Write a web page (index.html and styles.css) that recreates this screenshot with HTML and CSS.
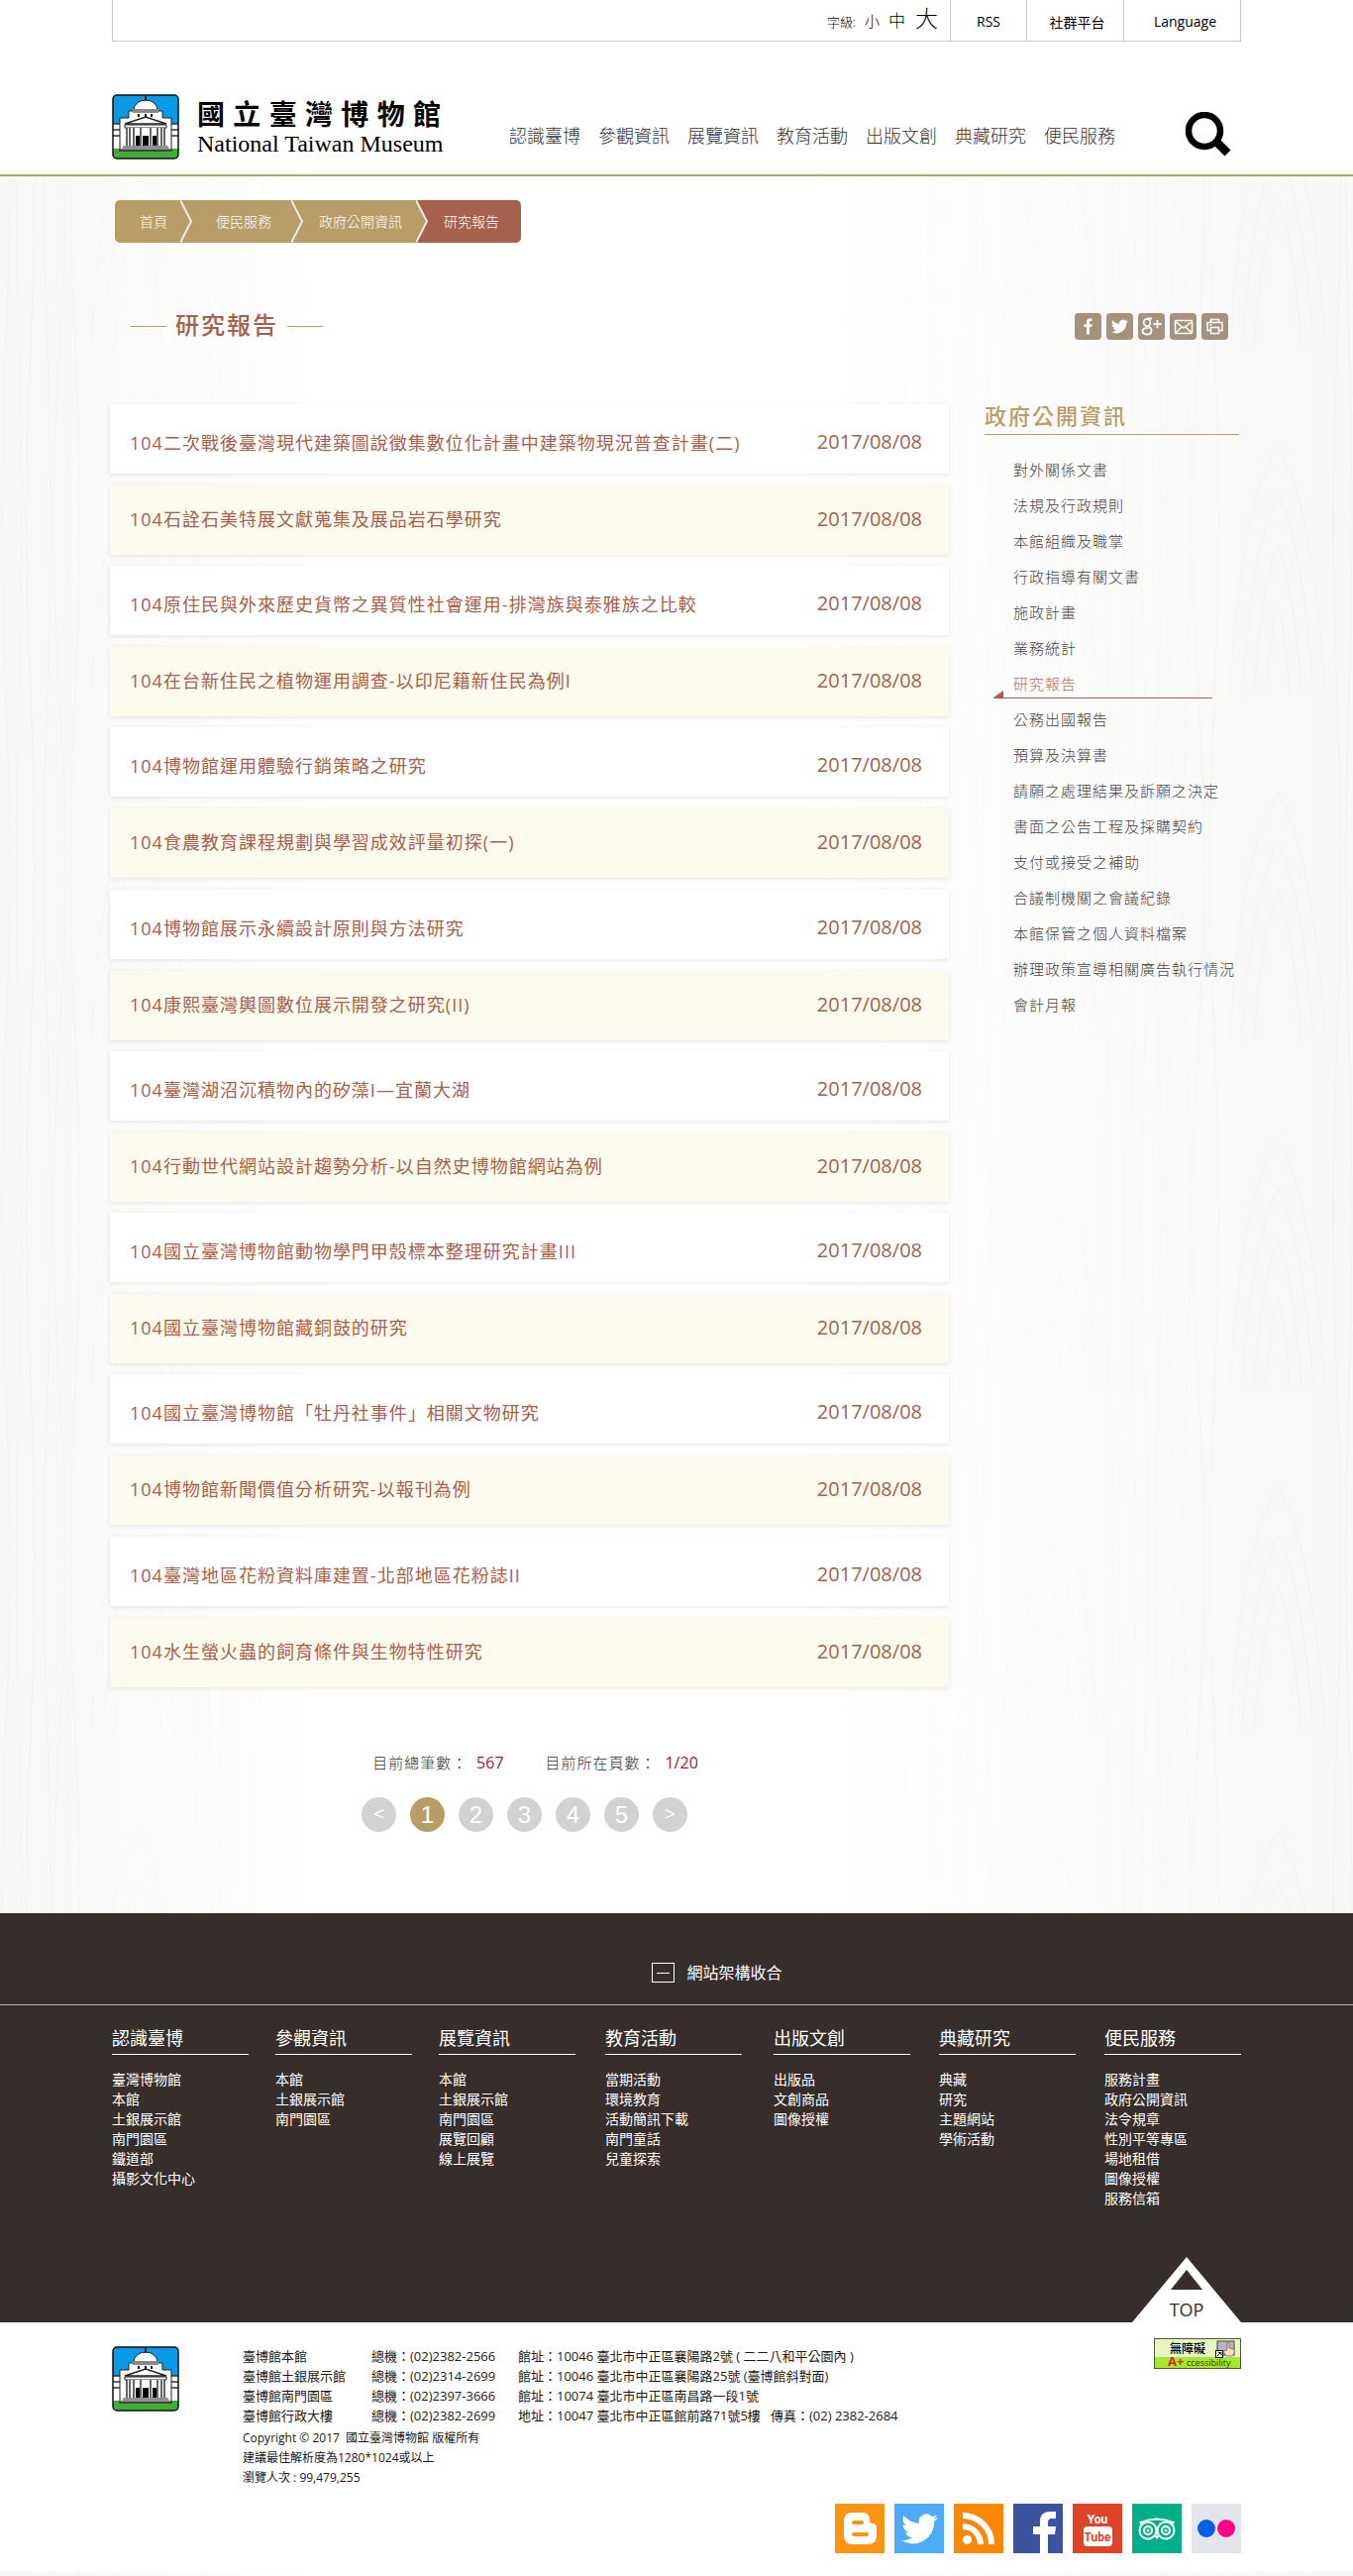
FILE: index.html
```html
<!DOCTYPE html>
<html lang="zh-Hant">
<head>
<meta charset="utf-8">
<meta name="viewport" content="width=device-width, initial-scale=1">
<title>研究報告 - 國立臺灣博物館</title>
<link rel="stylesheet" href="styles.css">
</head>
<body id="top">
<svg class="sprite" aria-hidden="true">
  <symbol id="museum" viewBox="0 0 68 66">
    <rect x="1" y="1" width="66" height="64" rx="4" fill="#0a9be6"/>
    <path d="M1 30h66v26H1z" fill="#fff"/>
    <path d="M1 55h66v6q0 4-4 4H5q-4 0-4-4z" fill="#3fae35"/>
    <path d="M1 30h7M1 36h7M1 42h7M60 30h7M60 36h7M60 42h7" stroke="#333" stroke-width="1.5"/>
    <path d="M8 56V24h9v-7h34v7h9v32z" fill="#fff" stroke="#222" stroke-width="1"/>
    <path d="M22 16a12 10 0 0 1 24 0z" fill="#fff" stroke="#222" stroke-width="1"/>
    <path d="M21 15h26v4H21z" fill="#888"/>
    <path d="M34 2v5" stroke="#111" stroke-width="1.5"/>
    <path d="M27 20v3M34 20v3M40 20v3" stroke="#111" stroke-width="2"/>
    <path d="M13 30l21-7 21 7z" fill="#fff" stroke="#222" stroke-width="1.5"/>
    <path d="M13 31h42v3H13z" fill="#fff" stroke="#222" stroke-width="1"/>
    <path d="M15 34h38v18H15z" fill="#fff"/>
    <path d="M15 34v18M18 34v18M22 34v18M29 34v18M39 34v18M46 34v18M50 34v18M53 34v18" stroke="#333" stroke-width="1.5"/>
    <path d="M24 42h4v10h-4zM31 42h6v10h-6zM41 42h4v10h-4z" fill="#000"/>
    <path d="M12 52h44l4 6H8z" fill="#8f8f8f"/>
    <path d="M7 57h54" stroke="#444" stroke-width="2"/>
    <rect x="1" y="1" width="66" height="64" rx="4" fill="none" stroke="#111" stroke-width="1.5"/>
  </symbol>
  <symbol id="bird" viewBox="0 0 24 24">
    <path d="M23.9 4.6a10 10 0 0 1-2.8.8 4.900 4.900 0 0 0 2.100-2.700 9.900 9.900 0 0 1-3.100 1.200 4.900 4.900 0 0 0-8.400 4.500A13.900 13.900 0 0 1 1.700 3.200a4.900 4.900 0 0 0 1.500 6.500 4.900 4.900 0 0 1-2.200-.6 4.900 4.900 0 0 0 3.900 4.900 4.900 4.900 0 0 1-2.200.1 4.900 4.900 0 0 0 4.600 3.400A9.900 9.900 0 0 1 0 19.500a14 14 0 0 0 21.500-12.400 10 10 0 0 0 2.400-2.500z" fill="#fff"/>
  </symbol>
</svg>

<header class="header">
  <div class="container">
    <div class="topbar">
      <div class="font-size">
        <span>字級:</span>
        <button type="button" class="fs-small">小</button>
        <button type="button" class="fs-medium">中</button>
        <button type="button" class="fs-large">大</button>
      </div>
      <a class="top-rss" href="#">RSS</a>
      <a class="top-social" href="#">社群平台</a>
      <a class="top-lang" href="#">Language</a>
    </div>
    <div class="masthead">
      <a class="brand" href="#">
        <svg width="68" height="66" aria-hidden="true"><use href="#museum"/></svg>
        <span class="brand-text">
          <span class="brand-zh"><span>國</span><span>立</span><span>臺</span><span>灣</span><span>博</span><span>物</span><span>館</span></span>
          <span class="brand-en">National Taiwan Museum</span>
        </span>
      </a>
      <nav class="main-nav">
        <a href="#">認識臺博</a><a href="#">參觀資訊</a><a href="#">展覽資訊</a><a href="#">教育活動</a><a href="#">出版文創</a><a href="#">典藏研究</a><a href="#">便民服務</a>
      </nav>
      <button type="button" class="search" aria-label="搜尋">
        <svg width="48" height="46" viewBox="0 0 48 46"><circle cx="20" cy="19" r="16" fill="none" stroke="#000" stroke-width="6.500"/><path d="M32 30l11.500 11.500" stroke="#000" stroke-width="8.500"/></svg>
      </button>
    </div>
  </div>
</header>

<main class="main">
  <div class="container">
    <ol class="breadcrumb">
      <li><a href="#">首頁</a></li>
      <li class="sep"><svg width="12" height="43"><path d="M0 0l11 21.500L0 43" fill="#b89e66" stroke="#efebe2" stroke-width="2"/></svg></li>
      <li><a href="#">便民服務</a></li>
      <li class="sep"><svg width="12" height="43"><path d="M0 0l11 21.500L0 43" fill="#b89e66" stroke="#efebe2" stroke-width="2"/></svg></li>
      <li><a href="#">政府公開資訊</a></li>
      <li class="sep sep-current"><svg width="12" height="43"><path d="M0 0l11 21.500L0 43" fill="#b89e66" stroke="#efebe2" stroke-width="2"/></svg></li>
      <li class="current">研究報告</li>
    </ol>

    <div class="title-row">
      <h1><span>研究報告</span></h1>
      <div class="share">
        <a href="#" aria-label="Facebook"><svg viewBox="0 0 27 27"><path d="M17.500 5.500h-2.300q-3.200 0-3.200 3.300v2.400H9.500v2.800H12v7.500h3v-7.500h2.300l.4-2.800H15V9.300q0-1.200 1.200-1.200h1.300z" fill="#fff"/></svg></a>
        <a href="#" aria-label="Twitter"><svg viewBox="0 0 27 27"><use href="#bird" x="5" y="5" width="17" height="17"/></svg></a>
        <a href="#" aria-label="Google+"><svg viewBox="0 0 27 27" fill="none" stroke="#fff" stroke-width="1.800"><ellipse cx="9" cy="9.500" rx="3.300" ry="3.700"/><path d="M9 5.500h5M10 13q3.500 2 3.500 4.500 0 4-4.500 4t-4.500-3.500q0-3 6-3"/><path d="M19.500 7v8M15.500 11h8"/></svg></a>
        <a href="#" aria-label="Email"><svg viewBox="0 0 27 27" fill="none" stroke="#fff" stroke-width="1.500"><rect x="5.500" y="7.500" width="17" height="13" rx="1"/><path d="M6 9l8 6 8-6M6 20l6-6M22 20l-6-6"/></svg></a>
        <a href="#" aria-label="列印"><svg viewBox="0 0 27 27" fill="none" stroke="#fff" stroke-width="1.500"><path d="M9.500 9.500v-3h8v3M9 17.500H6v-8h15v8h-3M8.500 12h2"/><path d="M9.500 14.500h8v6h-8z"/></svg></a>
      </div>
    </div>

    <div class="content">
      <section>
        <ul class="reports">
          <li><a href="#">104二次戰後臺灣現代建築圖說徵集數位化計畫中建築物現況普查計畫(二)</a><time>2017/08/08</time></li>
          <li><a href="#">104石詮石美特展文獻蒐集及展品岩石學研究</a><time>2017/08/08</time></li>
          <li><a href="#">104原住民與外來歷史貨幣之異質性社會運用-排灣族與泰雅族之比較</a><time>2017/08/08</time></li>
          <li><a href="#">104在台新住民之植物運用調查-以印尼籍新住民為例I</a><time>2017/08/08</time></li>
          <li><a href="#">104博物館運用體驗行銷策略之研究</a><time>2017/08/08</time></li>
          <li><a href="#">104食農教育課程規劃與學習成效評量初探(一)</a><time>2017/08/08</time></li>
          <li><a href="#">104博物館展示永續設計原則與方法研究</a><time>2017/08/08</time></li>
          <li><a href="#">104康熙臺灣輿圖數位展示開發之研究(II)</a><time>2017/08/08</time></li>
          <li><a href="#">104臺灣湖沼沉積物內的矽藻I—宜蘭大湖</a><time>2017/08/08</time></li>
          <li><a href="#">104行動世代網站設計趨勢分析-以自然史博物館網站為例</a><time>2017/08/08</time></li>
          <li><a href="#">104國立臺灣博物館動物學門甲殼標本整理研究計畫III</a><time>2017/08/08</time></li>
          <li><a href="#">104國立臺灣博物館藏銅鼓的研究</a><time>2017/08/08</time></li>
          <li><a href="#">104國立臺灣博物館「牡丹社事件」相關文物研究</a><time>2017/08/08</time></li>
          <li><a href="#">104博物館新聞價值分析研究-以報刊為例</a><time>2017/08/08</time></li>
          <li><a href="#">104臺灣地區花粉資料庫建置-北部地區花粉誌II</a><time>2017/08/08</time></li>
          <li><a href="#">104水生螢火蟲的飼育條件與生物特性研究</a><time>2017/08/08</time></li>
        </ul>
        <div class="counts">
          <span>目前總筆數： <b>567</b></span>
          <span>目前所在頁數： <b>1/20</b></span>
        </div>
        <nav class="pager" aria-label="分頁">
          <a class="arrow" href="#">&lt;</a><a class="on" href="#">1</a><a href="#">2</a><a href="#">3</a><a href="#">4</a><a href="#">5</a><a class="arrow" href="#">&gt;</a>
        </nav>
      </section>

      <aside class="side">
        <h2>政府公開資訊</h2>
        <ul>
          <li><a href="#">對外關係文書</a></li>
          <li><a href="#">法規及行政規則</a></li>
          <li><a href="#">本館組織及職掌</a></li>
          <li><a href="#">行政指導有關文書</a></li>
          <li><a href="#">施政計畫</a></li>
          <li><a href="#">業務統計</a></li>
          <li class="active"><a href="#">研究報告</a></li>
          <li><a href="#">公務出國報告</a></li>
          <li><a href="#">預算及決算書</a></li>
          <li><a href="#">請願之處理結果及訴願之決定</a></li>
          <li><a href="#">書面之公告工程及採購契約</a></li>
          <li><a href="#">支付或接受之補助</a></li>
          <li><a href="#">合議制機關之會議紀錄</a></li>
          <li><a href="#">本館保管之個人資料檔案</a></li>
          <li><a href="#">辦理政策宣導相關廣告執行情況</a></li>
          <li><a href="#">會計月報</a></li>
        </ul>
      </aside>
    </div>
  </div>
</main>

<footer>
  <div class="sitemap">
    <div class="toggle-row">
      <button type="button" class="toggle"><span class="minus"></span>網站架構收合</button>
    </div>
    <div class="container sitemap-cols">
      <div><h3>認識臺博</h3><ul><li><a href="#">臺灣博物館</a></li><li><a href="#">本館</a></li><li><a href="#">土銀展示館</a></li><li><a href="#">南門園區</a></li><li><a href="#">鐵道部</a></li><li><a href="#">攝影文化中心</a></li></ul></div>
      <div><h3>參觀資訊</h3><ul><li><a href="#">本館</a></li><li><a href="#">土銀展示館</a></li><li><a href="#">南門園區</a></li></ul></div>
      <div><h3>展覽資訊</h3><ul><li><a href="#">本館</a></li><li><a href="#">土銀展示館</a></li><li><a href="#">南門園區</a></li><li><a href="#">展覽回顧</a></li><li><a href="#">線上展覽</a></li></ul></div>
      <div><h3>教育活動</h3><ul><li><a href="#">當期活動</a></li><li><a href="#">環境教育</a></li><li><a href="#">活動簡訊下載</a></li><li><a href="#">南門童話</a></li><li><a href="#">兒童探索</a></li></ul></div>
      <div><h3>出版文創</h3><ul><li><a href="#">出版品</a></li><li><a href="#">文創商品</a></li><li><a href="#">圖像授權</a></li></ul></div>
      <div><h3>典藏研究</h3><ul><li><a href="#">典藏</a></li><li><a href="#">研究</a></li><li><a href="#">主題網站</a></li><li><a href="#">學術活動</a></li></ul></div>
      <div><h3>便民服務</h3><ul><li><a href="#">服務計畫</a></li><li><a href="#">政府公開資訊</a></li><li><a href="#">法令規章</a></li><li><a href="#">性別平等專區</a></li><li><a href="#">場地租借</a></li><li><a href="#">圖像授權</a></li><li><a href="#">服務信箱</a></li></ul></div>
      <a class="to-top" href="#top">
        <svg width="110" height="66" aria-hidden="true"><path d="M55 0l55 66H0z" fill="#fff"/><path d="M55 13l16 20H39z" fill="#372d2b"/></svg>
        <span>TOP</span>
      </a>
    </div>
  </div>

  <div class="bottom">
    <div class="container">
      <div class="bottom-row">
        <svg class="bottom-logo" width="68" height="66" aria-hidden="true"><use href="#museum"/></svg>
        <div class="info">
          <table>
            <tr><td class="place">臺博館本館</td><td class="phone">總機：(02)2382-2566</td><td>館址：10046 臺北市中正區襄陽路2號 ( 二二八和平公園內 )</td></tr>
            <tr><td class="place">臺博館土銀展示館</td><td class="phone">總機：(02)2314-2699</td><td>館址：10046 臺北市中正區襄陽路25號 (臺博館斜對面)</td></tr>
            <tr><td class="place">臺博館南門園區</td><td class="phone">總機：(02)2397-3666</td><td>館址：10074 臺北市中正區南昌路一段1號</td></tr>
            <tr><td class="place">臺博館行政大樓</td><td class="phone">總機：(02)2382-2699</td><td>地址：10047 臺北市中正區館前路71號5樓 &nbsp; 傳真：(02) 2382-2684</td></tr>
          </table>
          <p>Copyright © 2017 &nbsp;國立臺灣博物館 版權所有</p>
          <p>建議最佳解析度為1280*1024或以上</p>
          <p>瀏覽人次 : 99,479,255</p>
        </div>
        <a class="badge" href="#" aria-label="無障礙 A+ Accessibility">
          <svg width="88" height="31" viewBox="0 0 88 31">
            <rect width="88" height="31" fill="#e6f7bf"/><rect y="19" width="88" height="12" fill="#a5e62e"/>
            <rect x="64" y="3" width="17" height="14" fill="#b9b4c2" stroke="#444"/>
            <path d="M74 4q2-1 2 2v4l4 1q2 1 1 4l-2 3h-6l-3-5 4-1z" fill="#fbdcc4" stroke="#7a5a4a" stroke-width=".7"/>
            <rect x="62.500" y="12.500" width="7" height="7" fill="#fff" stroke="#111"/><path d="M64 18l3-3M65 14.500h3v3" stroke="#111" fill="none"/>
            <text x="16" y="15" font-size="12" font-weight="500" fill="#000">無障礙</text>
            <text x="14" y="28" font-size="13" font-weight="700" fill="#cf2a1d">A+</text>
            <text x="33" y="28" font-size="9" fill="#2b3d12">ccessibility</text>
            <rect x=".5" y=".5" width="87" height="30" fill="none" stroke="#4c5a30"/>
          </svg>
        </a>
      </div>
      <div class="social">
        <a href="#" aria-label="Blogger"><svg viewBox="0 0 50 50"><rect width="50" height="50" fill="#fb9313"/><path d="M17 9h11q7 0 7 8 0 3 3 3 4 0 4 5v7q0 9-9 9H18q-9 0-9-9V18q0-9 8-9z" fill="#fff"/><path d="M19 19h8M19 31h13" stroke="#fb9313" stroke-width="4" stroke-linecap="round"/></svg></a>
        <a href="#" aria-label="Twitter"><svg viewBox="0 0 50 50"><rect width="50" height="50" fill="#4dabf5"/><use href="#bird" x="7" y="7" width="37" height="37"/></svg></a>
        <a href="#" aria-label="RSS"><svg viewBox="0 0 50 50"><rect width="50" height="50" fill="#fb8705"/><circle cx="13.500" cy="36.500" r="4.500" fill="#fff"/><path d="M9 23a18 18 0 0 1 18 18M9 12a29 29 0 0 1 29 29" fill="none" stroke="#fff" stroke-width="6"/></svg></a>
        <a href="#" aria-label="Facebook"><svg viewBox="0 0 50 50"><rect width="50" height="50" fill="#3b53a0"/><path d="M27 50V31h-7v-8h7v-5q0-10 10-10h6v7h-4q-4 0-4 4v4h8l-1 8h-7v19z" fill="#fff"/></svg></a>
        <a href="#" aria-label="YouTube"><svg viewBox="0 0 50 50"><rect width="50" height="50" fill="#de4526"/><rect x="11" y="23" width="29" height="20" rx="4" fill="#fff"/><text class="yt" x="25" y="20" fill="#fff" text-anchor="middle">You</text><text class="yt" x="25" y="38" fill="#de4526" text-anchor="middle">Tube</text></svg></a>
        <a href="#" aria-label="TripAdvisor"><svg viewBox="0 0 50 50"><rect width="50" height="50" fill="#00af87"/><g fill="none" stroke="#fff" stroke-width="2"><circle cx="16" cy="27" r="8.500"/><circle cx="34" cy="27" r="8.500"/><circle cx="16" cy="27" r="4"/><circle cx="34" cy="27" r="4"/><path d="M9 19q16-7 32 0"/></g><g fill="#fff"><circle cx="16" cy="27" r="1.500"/><circle cx="34" cy="27" r="1.500"/><path d="M7 18h6l-4 5zM43 18h-6l4 5zM22 32h6l-3 4z"/></g></svg></a>
        <a href="#" aria-label="Flickr"><svg viewBox="0 0 50 50"><rect width="50" height="50" fill="#e2e6ea"/><circle cx="15" cy="25" r="9" fill="#0560e8"/><circle cx="35" cy="25" r="9" fill="#ff0084"/></svg></a>
      </div>
    </div>
  </div>
</footer>
</body>
</html>
```
FILE: styles.css
```css
* { box-sizing: border-box; }

body {
  margin: 0;
  font-family: "Open Sans", "Noto Sans CJK TC", sans-serif;
  font-size: 14px;
  color: #333;
  background:
    linear-gradient(90deg, rgba(255,255,255,0) 0%, #fff 24%, #fff 60%, rgba(255,255,255,0) 100%),
    url("data:image/svg+xml,%3Csvg xmlns='http://www.w3.org/2000/svg' width='230' height='700' fill='none' stroke='%23b8b4a8' stroke-opacity='.1'%3E%3Cpath d='M6 0q8 175 0 350t0 350M19 0q-6 175 0 350t0 350M31 0q9 175 0 350t0 350M48 0q-7 175 0 350t0 350M60 0q12 175 0 350t0 350M76 0q-9 175 0 350t0 350M200 0q8 175 0 350t0 350M212 0q-6 175 0 350t0 350M224 0q5 175 0 350t0 350M92 350q10-190 48-250 36 60 48 250M104 350q10-150 36-200 26 50 36 200M116 350q8-110 24-150 16 40 24 150M92 700q10-190 48-250 36 60 48 250M104 700q10-150 36-200 26 50 36 200M116 700q8-110 24-150 16 40 24 150M128 700q4-60 12-90 8 30 12 90'/%3E%3C/svg%3E"),
    #f8f8f7;
}

a { color: inherit; text-decoration: none; }
ul, ol { margin: 0; padding: 0; list-style: none; }
h1, h2, h3, p { margin: 0; font-weight: 400; }
button { padding: 0; border: 0; background: none; color: inherit; font-family: inherit; cursor: pointer; }
svg { display: block; }

.sprite { position: absolute; width: 0; height: 0; }
.container { max-width: 1140px; margin: 0 auto; }

/* Header */
.header { background: #fff; border-bottom: 2px solid #b89e66; }
.topbar {
  display: flex;
  justify-content: flex-end;
  height: 42px;
  border: solid #c9c9c9;
  border-width: 0 1px 1px;
  color: #000;
}
.font-size { display: flex; align-items: baseline; padding: 0 12px 0 0; font-size: 13px; line-height: 36px; font-weight: 300; }
.font-size button { font-weight: 300; color: #000; }
.fs-small { margin-left: 9px; font-size: 15px; }
.fs-medium { margin-left: 9px; font-size: 17px; }
.fs-large { margin-left: 10px; font-size: 23px; }
.topbar a { display: flex; align-items: center; justify-content: center; border-left: 1px solid #c9c9c9; padding-top: 2px; }
.top-rss { width: 77px; }
.top-social { width: 98px; padding-left: 4px; }
.top-lang { width: 118px; padding-left: 6px; }

.masthead { display: flex; align-items: flex-end; padding: 53px 9px 15px 0; }
.brand { display: flex; gap: 18px; color: #000; }
.brand-text { width: 246px; padding-top: 3px; }
.brand-zh { display: flex; justify-content: space-between; font-size: 28px; line-height: 34px; font-weight: 700; }
.brand-en { display: block; font-family: "Liberation Serif", serif; font-size: 24px; line-height: 26px; text-align: center; white-space: nowrap; }
.main-nav { display: flex; gap: 18px; margin-left: 69px; padding-bottom: 12px; font-size: 18px; line-height: 24px; font-weight: 300; white-space: nowrap; }
.search { margin: 0 0 2px auto; }

/* Breadcrumb */
.main { padding: 24px 0 82px; }
.breadcrumb { display: flex; width: max-content; margin-left: 3px; border-radius: 5px; overflow: hidden; color: #fff; line-height: 43px; }
.breadcrumb li { padding: 0 20px 0 24px; background: #b89e66; height: 43px; font-weight: 300; }
.breadcrumb li:first-child { padding-right: 13px; padding-left: 25px; }
.breadcrumb li:nth-child(5) { padding: 0 14px 0 16px; }
.breadcrumb li.current { padding: 0 22px 0 16px; background: #a6604b; }
.breadcrumb li.sep { padding: 0; }
.breadcrumb li.sep-current { background: #a6604b; }

/* Title */
.title-row { display: flex; align-items: center; justify-content: space-between; height: 44px; margin: 62px 13px 57px 19px; }
h1 { display: flex; align-items: center; gap: 9px; font-size: 24px; line-height: 30px; letter-spacing: 2px; color: #a6604b; font-weight: 500; }
h1 span { padding-bottom: 2px; }
h1::before, h1::after { content: ""; width: 36px; height: 1px; background: #b89e66; }
.share { display: flex; gap: 5px; }
.share a { width: 27px; height: 27px; border-radius: 4px; background: #a6927c; }

/* Report list */
.content { display: grid; grid-template-columns: 847fr 257fr; gap: 36px; margin: 0 2px 0 -2px; }
.reports li {
  display: flex;
  justify-content: space-between;
  align-items: center;
  height: 70px;
  margin-bottom: 12px;
  padding: 5px 27px 0 20px;
  background: #fff;
  box-shadow: 0 1px 4px rgba(60, 60, 90, .12);
  font-size: 18px;
  letter-spacing: 1px;
  color: #a6604b;
}
.reports li:nth-child(even) { margin-bottom: 11px; padding-top: 0; padding-bottom: 4px; background: #fdfbee; }
.reports li:nth-child(8n + 6) { margin-bottom: 12px; }
.reports li:last-child { margin-bottom: 0; }
.reports time { font-size: 20px; letter-spacing: 0; }

.counts { display: flex; justify-content: center; gap: 42px; margin-top: 64px; padding-left: 12px; font-size: 15px; line-height: 24px; letter-spacing: 1px; font-weight: 300; color: #333; }
.counts b { margin-left: 4px; font-weight: 400; letter-spacing: 0; font-size: 16px; color: #a8123e; }
.pager { display: flex; justify-content: center; gap: 14px; margin-top: 23px; padding-right: 10px; }
.pager a { width: 35px; height: 35px; border-radius: 50%; background: #d2d2d2; color: #fff; font-family: "Liberation Sans", sans-serif; font-size: 24px; line-height: 36px; text-align: center; }
.pager a.on { background: #b89e66; }
.pager a.arrow { font-family: "Open Sans", sans-serif; font-size: 20px; line-height: 34px; }

/* Side menu */
.side h2 { padding-bottom: 8px; border-bottom: 1px solid #b89e66; font-size: 22px; line-height: 22px; letter-spacing: 2px; color: #b89e66; font-weight: 500; }
.side ul { padding: 17px 0 0 29px; }
.side li { position: relative; font-size: 15px; line-height: 36px; letter-spacing: 1px; font-weight: 300; white-space: nowrap; color: #444; }
.side .active { color: #b9705c; }
.side .active::before { content: ""; position: absolute; left: -20px; right: 27px; bottom: 3px; height: 1px; background: #a6604b; }
.side .active::after { content: ""; position: absolute; left: -20px; bottom: 4px; border-left: 10px solid transparent; border-bottom: 7px solid #a6604b; }

/* Site map */
.sitemap { background: #372d2b; color: #fff; }
.toggle-row { display: flex; justify-content: center; padding: 48px 0 20px; border-bottom: 1px solid #b9b3b1; }
.toggle { display: flex; align-items: center; gap: 12px; margin-left: 82px; font-size: 16px; line-height: 24px; }
.minus { display: grid; place-items: center; width: 23px; height: 20px; border: 1px solid #fff; }
.minus::before { content: ""; width: 13px; height: 1px; background: #fff; }
.sitemap-cols { position: relative; display: grid; grid-template-columns: 165fr 165fr 168fr 170fr 167fr 167fr 138fr; padding: 21px 0 115px; }
.sitemap h3 { max-width: 138px; padding-bottom: 4px; border-bottom: 1px solid #fff; font-size: 18px; line-height: 24px; }
.sitemap-cols ul { margin-top: 15px; font-size: 14px; line-height: 20px; }
.to-top { position: absolute; right: 0; bottom: 0; color: #372d2b; }
.to-top span { position: absolute; left: 0; right: 0; bottom: 1px; text-align: center; font-size: 18px; line-height: 24px; }

/* Bottom */
.bottom { padding: 16px 0 18px; background: #fff; color: #231815; }
.bottom-row { display: flex; align-items: flex-start; }
.bottom-logo { flex: none; margin: 8px 64px 0 0; }
.info { padding-top: 8px; }
.info table { border-collapse: collapse; font-size: 13px; line-height: 20px; white-space: nowrap; }
.info td { padding: 0; }
.info .place { width: 130px; }
.info .phone { width: 148px; }
.info p { font-size: 12px; line-height: 20px; }
.info table + p { margin-top: 3px; }
.badge { margin-left: auto; }
.social { display: flex; justify-content: flex-end; gap: 10px; margin-top: 16px; }
.social a { width: 50px; height: 50px; }
.yt { font-family: "Roboto", sans-serif; font-size: 12px; font-weight: 700; }
```
